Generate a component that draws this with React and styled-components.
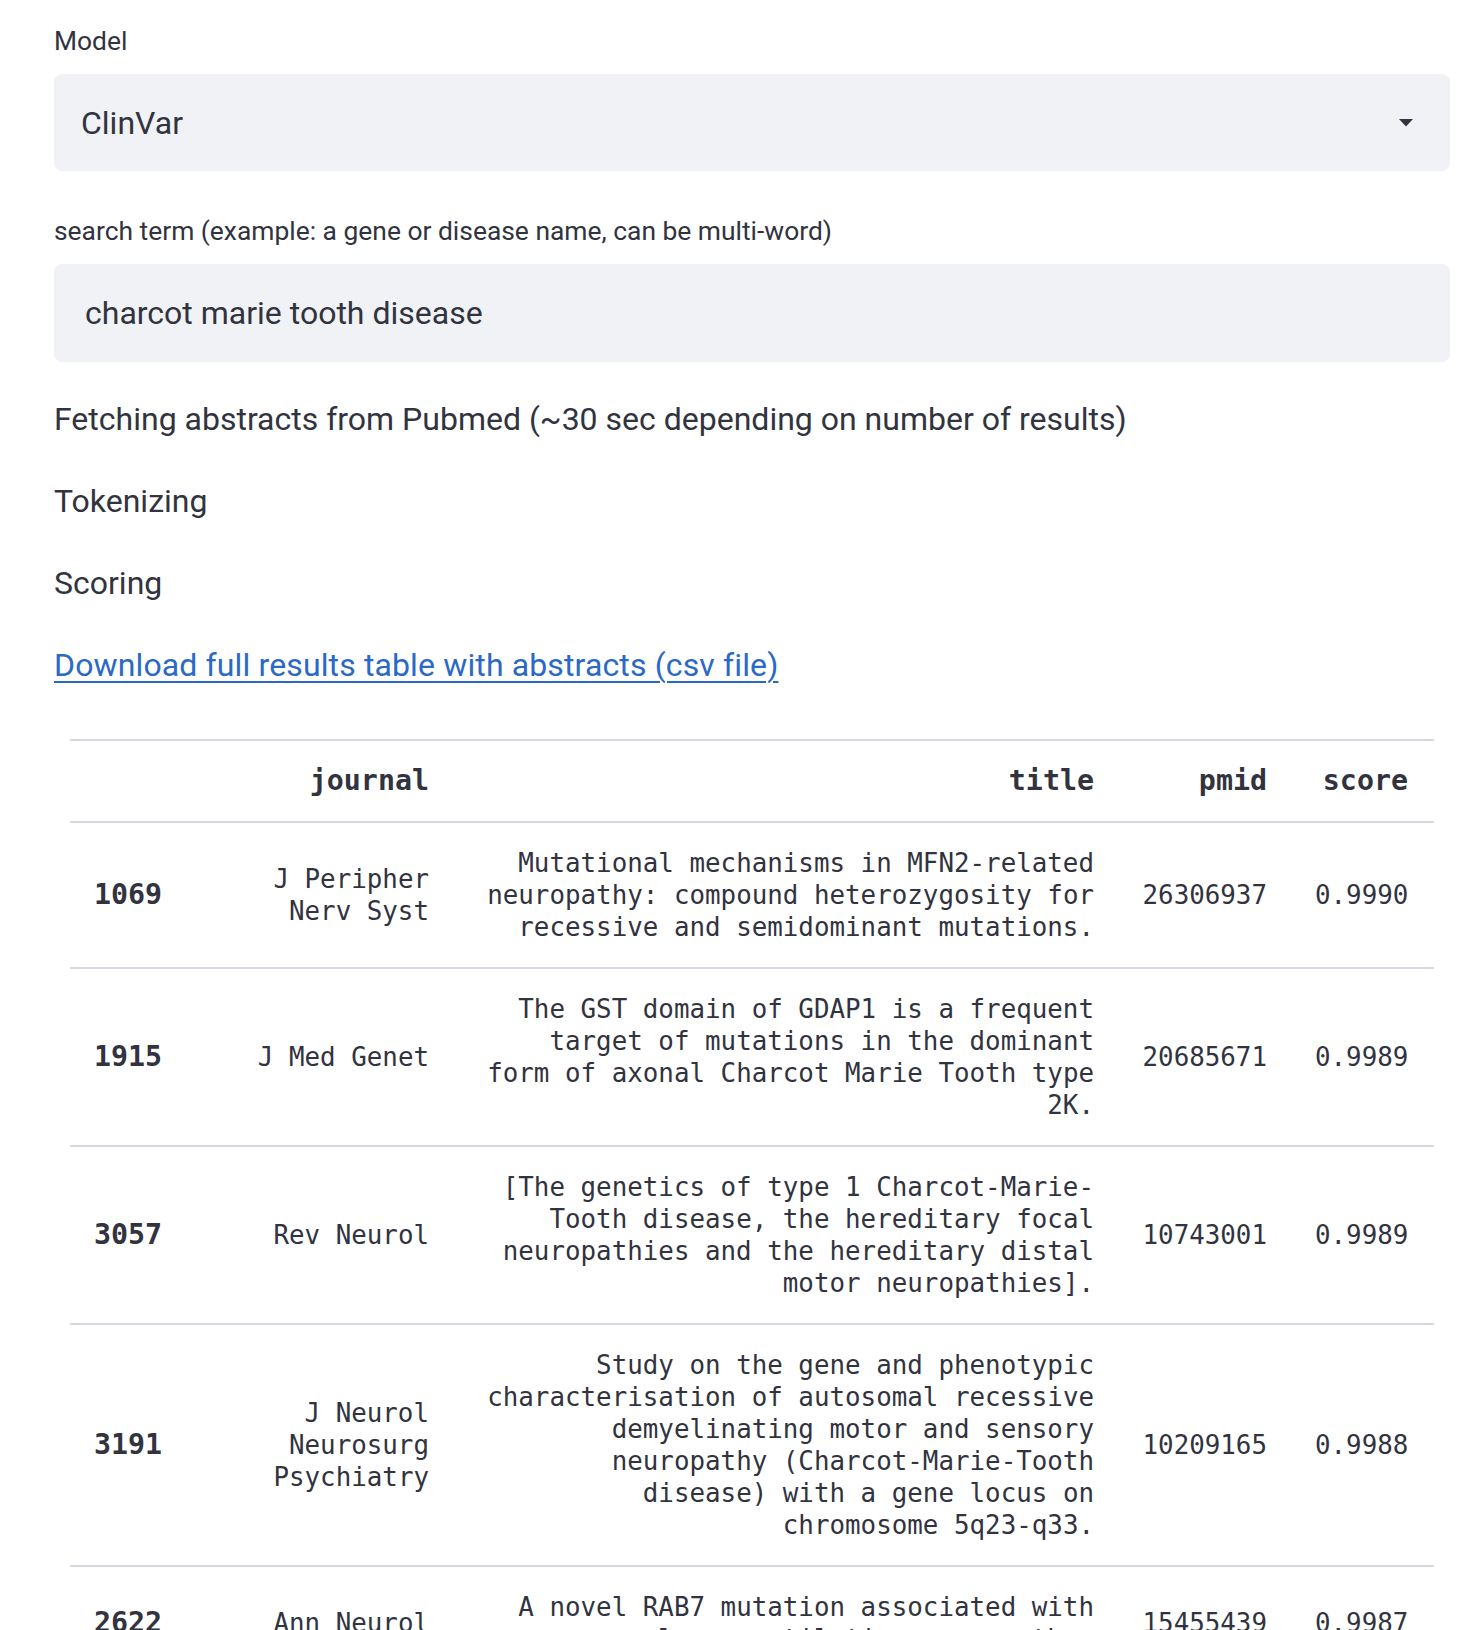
import React from "react"
import styled, { createGlobalStyle } from "styled-components"

const GlobalStyle = createGlobalStyle`
  html, body {
    margin: 0;
    padding: 0;
    background: #ffffff;
  }
  body {
    font-family: Roboto, "Noto Sans", sans-serif;
    color: #31333f;
  }
`

const Page = styled.div`
  box-sizing: border-box;
  height: 1630px;
  overflow: hidden;
  padding: 23px 34px 0 54px;
`

const Field = styled.div`
  margin-bottom: ${(p) => p.$mb}px;
`

const Label = styled.div`
  font-size: 26.4px;
  line-height: 36px;
  margin-bottom: 15px;
`

const SelectBox = styled.div`
  box-sizing: border-box;
  height: 97px;
  display: flex;
  align-items: center;
  justify-content: space-between;
  padding: 0 37px 0 27px;
  background: #f0f2f6;
  border-radius: 8px;
  font-size: 32px;
`

const InputBox = styled.div`
  box-sizing: border-box;
  height: 98px;
  display: flex;
  align-items: center;
  padding: 0 31px;
  background: #f0f2f6;
  border-radius: 8px;
  font-size: 32px;
`

const Status = styled.p`
  margin: 0 0 32px;
  font-size: 32px;
  line-height: 50px;
`

const DownloadLink = styled.a`
  color: #2a69c6;
  letter-spacing: 0.13px;
  text-decoration: underline;
  text-underline-offset: 5px;
  text-decoration-thickness: 2px;
`

const TableWrap = styled.div`
  margin: 49px 16px 0;
`

const Table = styled.table`
  width: 100%;
  table-layout: fixed;
  border-collapse: collapse;
  border-top: 2px solid #d6d9e2;
  font-family: "DejaVu Sans Mono", "Liberation Mono", monospace;
  font-size: 25.85px;
  line-height: 32px;
  color: #31333f;
`

const Col = styled.col`
  width: ${(p) => p.$w}px;
`

const Row = styled.tr`
  border-bottom: 2px solid #d6d9e2;
`

const HeadCell = styled.th`
  padding: 24px;
  text-align: right;
  font-size: 28.3px;
  font-weight: 700;
  vertical-align: middle;
  &:last-child {
    padding-right: 26px;
  }
`

const IndexCell = styled.th`
  padding: 24px;
  text-align: left;
  font-size: 28.3px;
  font-weight: 700;
  vertical-align: middle;
`

const Cell = styled.td`
  padding: 24px;
  text-align: right;
  vertical-align: middle;
  &:last-child {
    padding-right: 26px;
  }
`

const Caret = () => (
  <svg width="14" height="8" viewBox="0 0 14 8">
    <path d="M0 0 L14 0 L7 7.5 Z" fill="#31333f" />
  </svg>
)

const rows = [
  {
    idx: 1069,
    journal: "J Peripher Nerv Syst",
    title: "Mutational mechanisms in MFN2-related neuropathy: compound heterozygosity for recessive and semidominant mutations.",
    pmid: "26306937",
    score: "0.9990",
  },
  {
    idx: 1915,
    journal: "J Med Genet",
    title: "The GST domain of GDAP1 is a frequent target of mutations in the dominant form of axonal Charcot Marie Tooth type 2K.",
    pmid: "20685671",
    score: "0.9989",
  },
  {
    idx: 3057,
    journal: "Rev Neurol",
    title: "[The genetics of type 1 Charcot-Marie-Tooth disease, the hereditary focal neuropathies and the hereditary distal motor neuropathies].",
    pmid: "10743001",
    score: "0.9989",
  },
  {
    idx: 3191,
    journal: "J Neurol Neurosurg Psychiatry",
    title: "Study on the gene and phenotypic characterisation of autosomal recessive demyelinating motor and sensory neuropathy (Charcot-Marie-Tooth disease) with a gene locus on chromosome 5q23-q33.",
    pmid: "10209165",
    score: "0.9988",
  },
  {
    idx: 2622,
    journal: "Ann Neurol",
    title: "A novel RAB7 mutation associated with ulcero-mutilating neuropathy.",
    pmid: "15455439",
    score: "0.9987",
  },
]

const App = () => {
  return (
    <Page>
      <GlobalStyle />
      <Field $mb={42}>
        <Label>Model</Label>
        <SelectBox>
          <span>ClinVar</span>
          <Caret />
        </SelectBox>
      </Field>
      <Field $mb={32}>
        <Label>search term (example: a gene or disease name, can be multi-word)</Label>
        <InputBox>charcot marie tooth disease</InputBox>
      </Field>
      <Status>Fetching abstracts from Pubmed (~30 sec depending on number of results)</Status>
      <Status>Tokenizing</Status>
      <Status>Scoring</Status>
      <Status>
        <DownloadLink href="#">Download full results table with abstracts (csv file)</DownloadLink>
      </Status>
      <TableWrap>
        <Table>
          <colgroup>
            <Col $w={153} />
            <Col $w={230} />
            <Col $w={665} />
            <Col $w={173} />
            <Col $w={143} />
          </colgroup>
          <thead>
            <Row>
              <HeadCell />
              <HeadCell>journal</HeadCell>
              <HeadCell>title</HeadCell>
              <HeadCell>pmid</HeadCell>
              <HeadCell>score</HeadCell>
            </Row>
          </thead>
          <tbody>
            {rows.map((r) => (
              <Row key={r.idx}>
                <IndexCell>{r.idx}</IndexCell>
                <Cell>{r.journal}</Cell>
                <Cell>{r.title}</Cell>
                <Cell>{r.pmid}</Cell>
                <Cell>{r.score}</Cell>
              </Row>
            ))}
          </tbody>
        </Table>
      </TableWrap>
    </Page>
  )
}

export default App
